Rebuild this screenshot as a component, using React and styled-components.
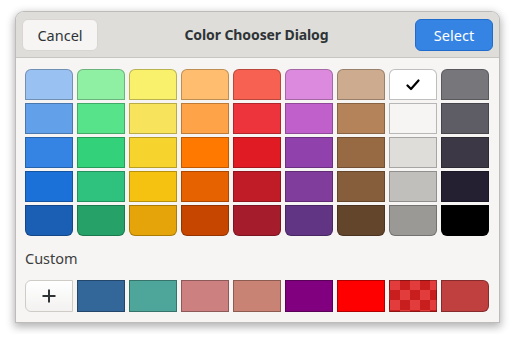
import React from 'react'
import styled, { createGlobalStyle } from 'styled-components'

const Global = createGlobalStyle`
  html, body {
    margin: 0;
    background: #ffffff;
  }
  body {
    font-family: "Noto Sans", "Open Sans", sans-serif;
  }
`

const Page = styled.div`
  padding: 11px 15px;
`

const Window = styled.div`
  width: 483px;
  background: #f6f5f4;
  border: 1px solid rgba(0, 0, 0, 0.23);
  border-radius: 9px 9px 0 0;
  box-shadow: 0 3px 9px 1px rgba(0, 0, 0, 0.3);
  overflow: hidden;
`

// Header bar
const HeaderBar = styled.div`
  height: 45px;
  display: flex;
  align-items: center;
  justify-content: space-between;
  padding: 0 6px;
  background: #deddda;
  border-bottom: 1px solid #c8c6c3;
`

const Button = styled.button`
  height: 32px;
  width: ${p => p.$w}px;
  border-radius: 6px;
  font-family: "Noto Sans", sans-serif;
  font-size: 14.5px;
  padding: 0;
  background: ${p => (p.$primary ? '#3584e4' : '#f6f5f4')};
  color: ${p => (p.$primary ? '#ffffff' : '#2e3436')};
  border: 1px solid ${p => (p.$primary ? '#1f6ccc' : '#d8d5d2')};
`

const Title = styled.div`
  font-weight: bold;
  font-size: 14px;
  color: #2e3436;
  letter-spacing: -0.1px;
`

// Body
const Body = styled.div`
  padding: 11px 10px 10px 9px;
`

const Palette = styled.div`
  display: flex;
  gap: 4px;
`

const Column = styled.div`
  display: flex;
  flex-direction: column;
  gap: 3px;
`

const Swatch = styled.div`
  box-sizing: border-box;
  width: 48px;
  height: 31px;
  background: ${p => p.$color};
  border: 1px solid rgba(0, 0, 0, 0.25);
  display: flex;
  align-items: center;
  justify-content: center;
  &:first-child {
    border-radius: 6px 6px 0 0;
  }
  &:last-child {
    border-radius: 0 0 6px 6px;
  }
`

const Label = styled.div`
  font-size: 14.5px;
  color: #3d3d3d;
  line-height: 20px;
  margin: 12px 0 12px 0;
`

const CustomRow = styled.div`
  display: flex;
  gap: 4px;
`

const CustomSwatch = styled.div`
  box-sizing: border-box;
  width: 48px;
  height: 32px;
  background: ${p => p.$color};
  border: 1px solid rgba(0, 0, 0, 0.3);
  &:last-child {
    border-radius: 0 6px 6px 0;
  }
`

const Checker = styled(CustomSwatch)`
  background-color: #e23c3c;
  background-image: conic-gradient(#c81e1e 25%, transparent 0 50%, #c81e1e 0 75%, transparent 0);
  background-size: 20px 20px;
  background-position: 0 -1px;
`

const AddButton = styled.div`
  box-sizing: border-box;
  width: 48px;
  height: 32px;
  border: 1px solid #cfcbc7;
  border-radius: 6px 0 0 6px;
  background: linear-gradient(#ffffff, #f3f2f1);
  display: flex;
  align-items: center;
  justify-content: center;
`

const palette = [
  ['#99c1f1', '#62a0ea', '#3584e4', '#1c71d8', '#1a5fb4'],
  ['#8ff0a4', '#57e389', '#33d17a', '#2ec27e', '#26a269'],
  ['#f9f06b', '#f8e45c', '#f6d32d', '#f5c211', '#e5a50a'],
  ['#ffbe6f', '#ffa348', '#ff7800', '#e66100', '#c64600'],
  ['#f66151', '#ed333b', '#e01b24', '#c01c28', '#a51d2d'],
  ['#dc8add', '#c061cb', '#9141ac', '#813d9c', '#613583'],
  ['#cdab8f', '#b5835a', '#986a44', '#865e3c', '#63452c'],
  ['#ffffff', '#f6f5f4', '#deddda', '#c0bfbc', '#9a9996'],
  ['#77767b', '#5e5c64', '#3d3846', '#241f31', '#000000'],
]

const custom = ['#336699', '#4ea59a', '#cc8080', '#c98375', '#800080', '#ff0000']

const Check = () => (
  <svg width="14" height="12" viewBox="0 0 14 12">
    <path d="M1.5 6.5 L5 10 L12.5 1.5" fill="none" stroke="#000" strokeWidth="2.2" strokeLinecap="round" strokeLinejoin="round" />
  </svg>
)

const Plus = () => (
  <svg width="16" height="16" viewBox="0 0 16 16">
    <path d="M8 1.5 V14.5 M1.5 8 H14.5" stroke="#2e3436" strokeWidth="2" />
  </svg>
)

const App = () => (
  <Page>
    <Global />
    <Window>
      <HeaderBar>
        <Button $w={76}>Cancel</Button>
        <Title>Color Chooser Dialog</Title>
        <Button $w={78} $primary>Select</Button>
      </HeaderBar>
      <Body>
        <Palette>
          {palette.map((col, i) => (
            <Column key={i}>
              {col.map(c => (
                <Swatch key={c} $color={c}>
                  {c === '#ffffff' && <Check />}
                </Swatch>
              ))}
            </Column>
          ))}
        </Palette>
        <Label>Custom</Label>
        <CustomRow>
          <AddButton><Plus /></AddButton>
          {custom.map(c => <CustomSwatch key={c} $color={c} />)}
          <Checker />
          <CustomSwatch $color="#c04040" />
        </CustomRow>
      </Body>
    </Window>
  </Page>
)

export default App
